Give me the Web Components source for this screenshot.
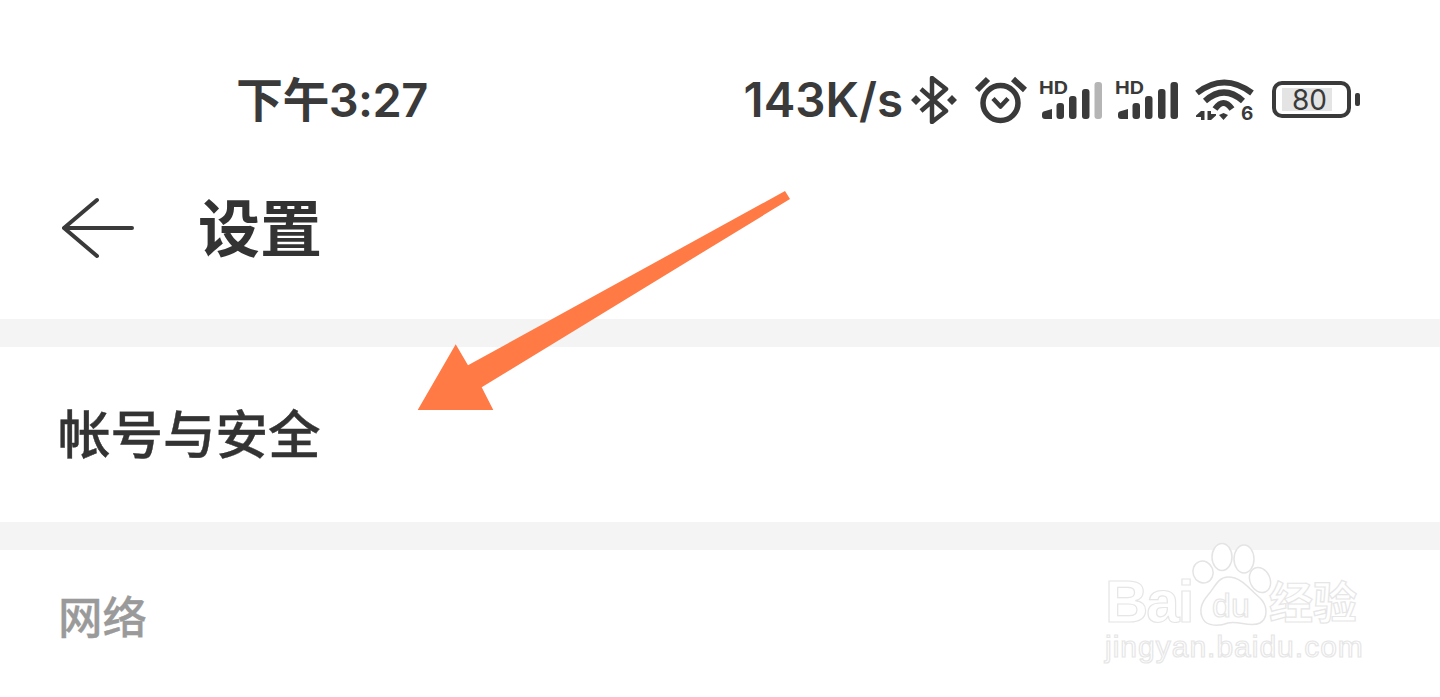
<!DOCTYPE html>
<html lang="zh">
<head>
<meta charset="utf-8">
<style>
  html, body { margin: 0; padding: 0; background: #fff; }
  body { height: 697px; overflow: hidden; position: relative; font-family: "Noto Sans CJK SC", "Noto Sans", sans-serif; color: #333; }
</style>
</head>
<body>
<status-bar></status-bar>
<page-header>设置</page-header>
<section-gap></section-gap>
<settings-row>帐号与安全</settings-row>
<section-gap></section-gap>
<section-title>网络</section-title>
<arrow-mark></arrow-mark>
<baidu-mark></baidu-mark>

<script>
class StatusBar extends HTMLElement {
  constructor() {
    super();
    const signal = (last) => `
      <svg class="signal" width="64" height="54" viewBox="0 -6 64 54">
        <text x="0" y="15" font-family="Inter, 'Liberation Sans', sans-serif" font-weight="700" font-size="18" textLength="29" lengthAdjust="spacingAndGlyphs" fill="#3a3a3a">HD</text>
        <path fill="#3a3a3a" d="M3 35a3 3 0 0 1 1.500-2.500L13 30v10H6a3 3 0 0 1-3-3z"/>
        <rect x="17.500" y="24" width="7.500" height="16" rx="3" fill="#3a3a3a"/>
        <rect x="30" y="17" width="7.500" height="23" rx="3" fill="#3a3a3a"/>
        <rect x="43" y="10" width="7.500" height="30" rx="3" fill="#3a3a3a"/>
        <rect x="55.500" y="3" width="7.500" height="37" rx="3" fill="${last}"/>
      </svg>`;
    this.attachShadow({ mode: 'open' }).innerHTML = `
    <style>
      :host { display: flex; align-items: center; height: 200px; padding: 0 79px 0 236px; box-sizing: border-box; color: #3a3a3a; font-family: Inter, "Noto Sans CJK SC", sans-serif; }
      .time { font-size: 47px; font-weight: 600; line-height: 60px; letter-spacing: -.6px; }
      .right { margin-left: auto; display: flex; align-items: center; }
      .speed { font-size: 47.500px; font-weight: 600; line-height: 60px; margin-right: 8px; }
      svg { display: block; flex: none; }
      .signal + .signal { margin-left: 12px; }
      .bt { margin-right: 18px; }
      .clock { margin-right: 12px; }
      .wifi { margin: 0 17px 0 16px; }
    </style>
    <span class="time">下午3:27</span>
    <div class="right">
      <span class="speed">143K/s</span>
      <svg class="bt" width="46" height="48" viewBox="0 0 46 48">
        <path d="M10 13l25 22-14 11V2l14 11-25 22" fill="none" stroke="#3a3a3a" stroke-width="4.500" stroke-linejoin="round"/>
        <path d="M5 19l5 5-5 5-5-5zM41 19l5 5-5 5-5-5z" fill="#3a3a3a"/>
      </svg>
      <svg class="clock" width="52" height="48" viewBox="0 0 52 48">
        <circle cx="25.500" cy="27" r="17.500" fill="none" stroke="#3a3a3a" stroke-width="5.500"/>
        <path d="M18 22.500l7.500 8 7.500-8" fill="none" stroke="#3a3a3a" stroke-width="4.500" stroke-linejoin="round"/>
        <path d="M2 14L13 3M38 3l12 11" fill="none" stroke="#3a3a3a" stroke-width="6"/>
      </svg>
      ${signal('#b5b5b5')}
      ${signal('#3a3a3a')}
      <svg class="wifi" width="60" height="58" viewBox="0 0 60 58">
        <g fill="none" stroke="#3a3a3a" stroke-width="6">
          <path d="M2 22Q29 1 57 22"/>
          <path d="M10 30Q29 13 48 30"/>
          <path d="M20 38Q28.500 26 37 38"/>
        </g>
        <g fill="#3a3a3a">
          <path d="M24 44l4.500-2 4.500 2-4.500 5z"/>
          <path d="M6 40h3.500v9H6v-3H1v-1.500zM12.500 40H16v3h5v1.500L16 49h-3.500z"/>
          <text x="46" y="49" font-family="Inter, sans-serif" font-weight="700" font-size="19">6</text>
        </g>
      </svg>
      <svg class="batt" width="89" height="38" viewBox="0 0 89 38">
        <rect x="2" y="2" width="75" height="33" rx="8" fill="#fff" stroke="#3a3a3a" stroke-width="4"/>
        <rect x="10" y="7" width="50" height="23" fill="#e4e4e4"/>
        <text x="20" y="29" font-family="Inter, sans-serif" font-size="28" fill="#3a3a3a">80</text>
        <rect x="83" y="12" width="5" height="13" rx="2" fill="#3a3a3a"/>
      </svg>
    </div>`;
  }
}

class PageHeader extends HTMLElement {
  constructor() {
    super();
    this.attachShadow({ mode: 'open' }).innerHTML = `
    <style>
      :host { display: flex; align-items: center; height: 56px; padding: 0 0 63px 62px; }
      svg { display: block; margin-right: 64px; flex: none; }
      .title { font-size: 62px; font-weight: 700; line-height: 56px; color: #333; padding-bottom: 6px; }
    </style>
    <svg width="72" height="64" viewBox="0 0 72 64">
      <path d="M35 4L2 32l33 28M2 32h68" fill="none" stroke="#3a3a3a" stroke-width="4" stroke-linecap="round" stroke-linejoin="round"/>
    </svg>
    <span class="title"><slot></slot></span>`;
  }
}

class SectionGap extends HTMLElement {
  constructor() {
    super();
    this.attachShadow({ mode: 'open' }).innerHTML = `
    <style>:host { display: block; height: 28px; background: #f4f4f4; }</style>`;
  }
}

class SettingsRow extends HTMLElement {
  constructor() {
    super();
    this.attachShadow({ mode: 'open' }).innerHTML = `
    <style>
      :host { display: flex; align-items: center; height: 175px; padding: 0 0 7px 58px; box-sizing: border-box; font-size: 52.500px; font-weight: 500; color: #333; -webkit-text-stroke: .4px #333; }
    </style>
    <slot></slot>`;
  }
}

class SectionTitle extends HTMLElement {
  constructor() {
    super();
    this.attachShadow({ mode: 'open' }).innerHTML = `
    <style>
      :host { display: block; padding: 36px 0 0 58px; font-size: 44.500px; line-height: 58px; font-weight: 500; color: #9a9a9a; -webkit-text-stroke: .3px #9a9a9a; }
    </style>
    <slot></slot>`;
  }
}

class ArrowMark extends HTMLElement {
  constructor() {
    super();
    this.attachShadow({ mode: 'open' }).innerHTML = `
    <style>:host { position: absolute; left: 0; top: 0; width: 1440px; height: 697px; pointer-events: none; }</style>
    <svg width="1440" height="697" viewBox="0 0 1440 697">
      <polygon fill="#ff7a45" points="785,191 790,199 481.700,387.300 493.300,410 417.700,410 455.700,344.300 468,365.300"/>
    </svg>`;
  }
}

class BaiduMark extends HTMLElement {
  constructor() {
    super();
    this.attachShadow({ mode: 'open' }).innerHTML = `
    <style>
      :host { position: absolute; left: 1100px; top: 540px; width: 270px; height: 130px; font-family: "Liberation Sans", "Noto Sans CJK SC", sans-serif; color: #fff; -webkit-text-stroke: 1.2px #e6e6e6; }
      span { position: absolute; white-space: nowrap; }
      svg { position: absolute; left: 0; top: 0; }
      .bai { left: 5px; top: 38px; font-size: 60px; line-height: .8; font-weight: 700; letter-spacing: -2px; }
      .du { left: 112px; top: 48px; font-size: 34px; line-height: 34px; }
      .cn { left: 169px; top: 42px; font-size: 44px; line-height: 44px; font-weight: 700; }
      .url { left: 5px; top: 92px; font-size: 30px; line-height: 30px; letter-spacing: 1px; }
    </style>
    <svg width="270" height="130" viewBox="0 0 270 130" fill="#fff" stroke="#e4e4e4" stroke-width="1.500">
      <ellipse cx="122" cy="17" rx="10" ry="13.500"/>
      <ellipse cx="144" cy="19" rx="10" ry="14"/>
      <ellipse cx="103" cy="32" rx="10" ry="11" transform="rotate(-20 103 32)"/>
      <ellipse cx="160" cy="40" rx="10" ry="13" transform="rotate(-25 160 40)"/>
      <path d="M128 37C118 37 115 47 108 55C102 62 98 70 103 79C107 87 120 86 128 83C138 80 150 88 160 83C168 78 168 66 160 58C150 50 142 37 128 37z"/>
    </svg>
    <span class="bai">Bai</span>
    <span class="du">du</span>
    <span class="cn">经验</span>
    <span class="url">jingyan.baidu.com</span>`;
  }
}

customElements.define('status-bar', StatusBar);
customElements.define('page-header', PageHeader);
customElements.define('section-gap', SectionGap);
customElements.define('settings-row', SettingsRow);
customElements.define('section-title', SectionTitle);
customElements.define('arrow-mark', ArrowMark);
customElements.define('baidu-mark', BaiduMark);
</script>
</body>
</html>
